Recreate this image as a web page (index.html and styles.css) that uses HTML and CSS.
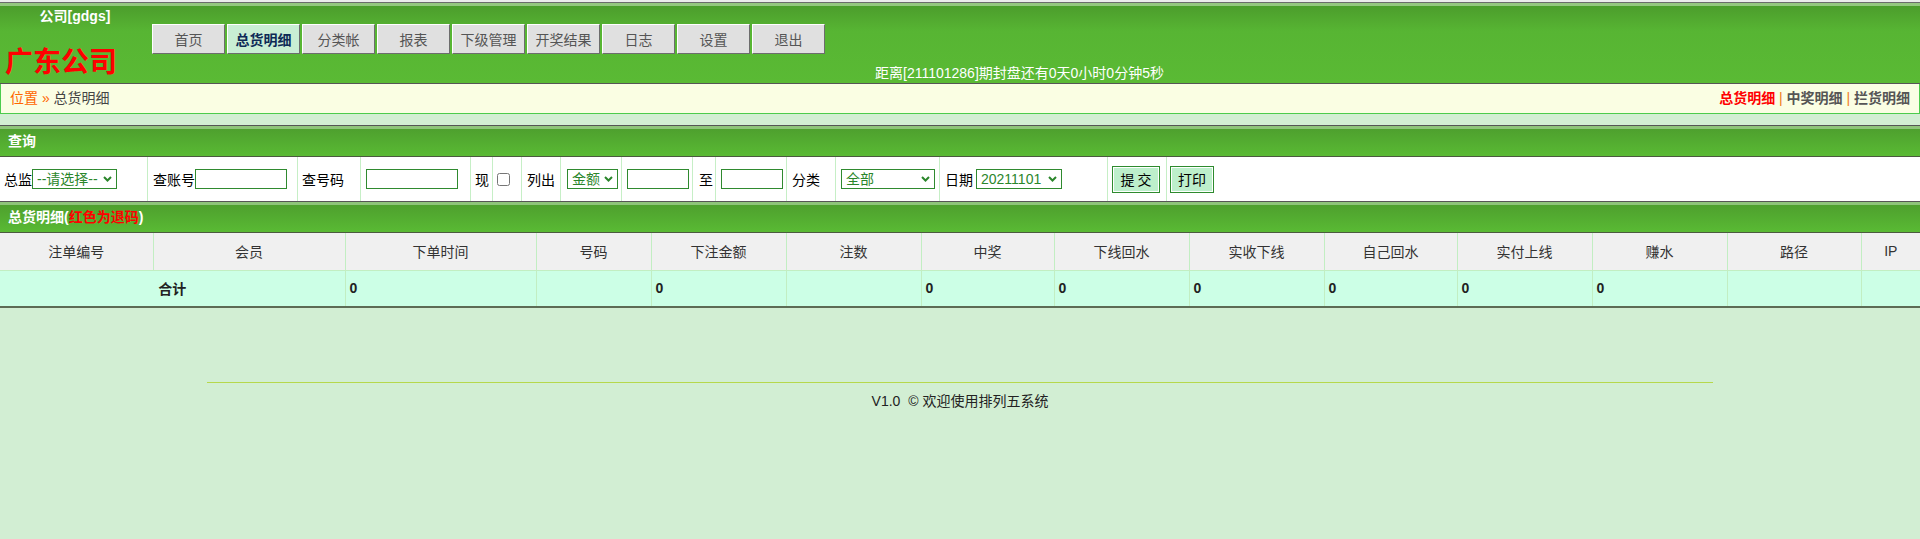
FILE: index.html
```html
<!DOCTYPE html>
<html lang="zh-CN">
<head>
<meta charset="utf-8">
<title>总货明细</title>
<link rel="stylesheet" href="styles.css">
</head>
<body>
<div class="topstrip"></div>
<header class="header">
  <div class="brand">
    <div class="company">公司[gdgs]</div>
    <div class="name">广东公司</div>
  </div>
  <div class="header-main">
    <nav class="nav">
      <a class="btn">首页</a>
      <a class="btn active">总货明细</a>
      <a class="btn">分类帐</a>
      <a class="btn">报表</a>
      <a class="btn">下级管理</a>
      <a class="btn">开奖结果</a>
      <a class="btn">日志</a>
      <a class="btn">设置</a>
      <a class="btn">退出</a>
    </nav>
    <div class="countdown">距离[211101286]期封盘还有0天0小时0分钟5秒</div>
  </div>
</header>

<div class="crumb">
  <div class="crumb-left"><span class="loc">位置</span> <span class="sep">»</span> 总货明细</div>
  <div class="crumb-right"><a class="on">总货明细</a> <span class="pipe">|</span> <a>中奖明细</a> <span class="pipe">|</span> <a>拦货明细</a></div>
</div>

<section class="panel">
  <div class="bar-title">查询</div>
  <form class="filter">
    <div class="cell c1">总监<span class="sel s1"><select><option>--请选择--</option></select><svg class="chev" viewBox="0 0 9 6"><path d="M1 1 L4.5 4.5 L8 1"/></svg></span></div>
    <div class="cell c2">查账号<input class="txt t1" type="text"></div>
    <div class="cell c3">查号码</div>
    <div class="cell c4"><input class="txt t1" type="text"></div>
    <div class="cell c5">现</div>
    <div class="cell c6"><input class="chk" type="checkbox"></div>
    <div class="cell c7">列出</div>
    <div class="cell c8"><span class="sel s2"><select><option>金额</option></select><svg class="chev" viewBox="0 0 9 6"><path d="M1 1 L4.5 4.5 L8 1"/></svg></span></div>
    <div class="cell c9"><input class="txt t2" type="text"></div>
    <div class="cell c10">至</div>
    <div class="cell c11"><input class="txt t2" type="text"></div>
    <div class="cell c12">分类</div>
    <div class="cell c13"><span class="sel s3"><select><option>全部</option></select><svg class="chev" viewBox="0 0 9 6"><path d="M1 1 L4.5 4.5 L8 1"/></svg></span></div>
    <div class="cell c14">日期<span class="sel s4"><select><option>20211101</option></select><svg class="chev" viewBox="0 0 9 6"><path d="M1 1 L4.5 4.5 L8 1"/></svg></span></div>
    <div class="cell c15"><button type="button" class="sbtn b1">提 交</button></div>
    <div class="cell c16"><button type="button" class="sbtn b2">打印</button></div>
  </form>

  <div class="bar-title">总货明细<span class="paren">(</span><span class="red">红色为退码</span><span class="paren">)</span></div>
  <table class="data">
    <colgroup>
      <col class="w153"><col class="w192"><col class="w191"><col class="w115">
      <col class="w135"><col class="w135"><col class="w133"><col class="w135">
      <col class="w135"><col class="w133"><col class="w135"><col class="w135">
      <col class="w134"><col class="w59">
    </colgroup>
    <thead>
      <tr>
        <th>注单编号</th><th>会员</th><th>下单时间</th><th>号码</th><th>下注金额</th><th>注数</th><th>中奖</th>
        <th>下线回水</th><th>实收下线</th><th>自己回水</th><th>实付上线</th><th>赚水</th><th>路径</th><th>IP</th>
      </tr>
    </thead>
    <tbody>
      <tr class="sum">
        <td colspan="2" class="total">合计</td>
        <td>0</td><td></td><td>0</td><td></td><td>0</td><td>0</td><td>0</td><td>0</td><td>0</td><td>0</td><td></td><td></td>
      </tr>
    </tbody>
  </table>
</section>

<footer class="footer">
  <div class="rule"></div>
  <div class="copy">V1.0&nbsp; © 欢迎使用排列五系统</div>
</footer>
</body>
</html>
```

FILE: styles.css
```css
* { box-sizing: border-box; }

html, body {
  margin: 0;
  padding: 0;
}

body {
  background: #d2eed3;
  font-family: "Liberation Sans", "Noto Sans CJK SC", sans-serif;
  font-size: 14px;
  color: #000;
}

.topstrip {
  height: 2px;
  background: #ececec;
}

/* ---------- header ---------- */
.header {
  display: flex;
  height: 82px;
  border-top: 1px solid #6b6b6b;
  border-bottom: 1px solid #555;
  background: linear-gradient(#94c77f 0, #94c77f 3px, #4c9d2c 3px, #57b533 28px, #5aba34 100%);
}

.brand {
  width: 152px;
  flex: none;
}

.company {
  padding-top: 5px;
  padding-right: 2px;
  line-height: 16px;
  text-align: center;
  color: #fff;
  font-weight: bold;
  font-size: 14px;
}

.name {
  margin-top: 21px;
  padding-left: 5px;
  line-height: 30px;
  font-size: 28px;
  font-weight: bold;
  color: #f00;
  font-family: "Noto Sans CJK SC", sans-serif;
}

.header-main {
  flex: 1;
  display: flex;
  flex-direction: column;
}

.nav {
  margin-top: 21px;
  display: flex;
  gap: 2px;
}

.btn {
  width: 73px;
  height: 30px;
  line-height: 28px;
  text-align: center;
  font-size: 14px;
  color: #555;
  background: #e0e0e0;
  border: 1px solid;
  border-color: #fff #6d6d6d #6d6d6d #fff;
  font-family: "Noto Sans CJK SC", sans-serif;
  cursor: pointer;
}

.btn.active {
  background: #c9eed4;
  color: #0d2a56;
  font-weight: bold;
}

.countdown {
  margin-top: 11px;
  padding-left: 723px;
  line-height: 16px;
  font-size: 14px;
  color: #fff;
  white-space: nowrap;
}

/* ---------- breadcrumb ---------- */
.crumb {
  display: flex;
  justify-content: space-between;
  height: 30px;
  padding: 0 9px;
  line-height: 29px;
  background: #fafee3;
  border: 1px solid #4ccc4c;
  border-top: none;
  color: #444;
}

.crumb .loc, .crumb .sep { color: #f60; }
.crumb-right a { color: #555; font-weight: bold; }
.crumb-right a.on { color: #f00; }
.crumb-right .pipe { color: #f07a1a; }

/* ---------- panel ---------- */
.panel {
  margin-top: 11px;
}

.bar-title {
  height: 32px;
  line-height: 30px;
  padding-left: 8px;
  border-top: 1px solid #555;
  border-bottom: 1px solid #4b5a3f;
  background: linear-gradient(#8ec47a 0, #8ec47a 3px, #4ea02e 3px, #58b733 27px, #5aba34 100%);
  color: #fff;
  font-weight: bold;
  font-size: 14px;
}

.bar-title .red { color: #f00; }

.filter {
  display: flex;
  height: 44px;
  background: #fff;
}

.cell {
  display: flex;
  align-items: center;
  flex: none;
  height: 100%;
  border-right: 1px solid #c6efc6;
  white-space: nowrap;
}

.c1 { width: 148px; padding-left: 4px; }
.c2 { width: 150px; padding-left: 5px; }
.c3 { width: 63px; padding-left: 4px; }
.c4 { width: 110px; padding-left: 5px; }
.c5 { width: 22px; padding-left: 4px; }
.c6 { width: 29px; padding-left: 4px; }
.c7 { width: 39px; padding-left: 5px; }
.c8 { width: 61px; padding-left: 6px; }
.c9 { width: 71px; padding-left: 5px; }
.c10 { width: 23px; padding-left: 6px; }
.c11 { width: 71px; padding-left: 5px; }
.c12 { width: 49px; padding-left: 5px; }
.c13 { width: 104px; padding-left: 5px; }
.c14 { width: 168px; padding-left: 5px; }
.c15 { width: 59px; padding-left: 4px; }
.c16 { border-right: none; padding-left: 3px; }

.txt {
  height: 20px;
  margin: 0;
  border: 1px solid #2f8a2f;
  background: #fff;
  padding: 0 2px;
  outline: none;
}
.t1 { width: 92px; }
.t2 { width: 62px; }

.sel {
  position: relative;
  display: inline-block;
  height: 20px;
}
.sel select {
  appearance: none;
  -webkit-appearance: none;
  height: 20px;
  margin: 0;
  padding: 0 0 0 4px;
  border: 1px solid #2f8a2f;
  border-radius: 0;
  background: #fff;
  color: #2b862b;
  font-family: "Liberation Sans", "Noto Sans CJK SC", sans-serif;
  font-size: 14px;
  line-height: 18px;
}
.s1 select { width: 85px; }
.s2 select { width: 51px; }
.s3 select { width: 94px; }
.s4 select { width: 86px; }
.s4 { margin-left: 3px; }

.chev {
  position: absolute;
  right: 5px;
  top: 7px;
  width: 9px;
  height: 6px;
  pointer-events: none;
}
.chev path {
  fill: none;
  stroke: #2b862b;
  stroke-width: 2;
}

.chk {
  width: 13px;
  height: 13px;
  margin: 0;
}

.sbtn {
  height: 27px;
  margin: 0;
  padding: 0;
  border: 1px solid #2e8b2e;
  box-shadow: inset 0 0 0 1px #fff;
  background: #bdefcb;
  color: #000;
  font-family: "Noto Sans CJK SC", sans-serif;
  font-size: 14px;
}
.b1 { width: 48px; }
.b2 { width: 44px; }

/* ---------- table ---------- */
.data {
  width: 100%;
  table-layout: fixed;
  border-collapse: collapse;
  border-bottom: 2px solid #5d6c55;
}

.w153 { width: 153px; }
.w192 { width: 192px; }
.w191 { width: 191px; }
.w115 { width: 115px; }
.w135 { width: 135px; }
.w133 { width: 133px; }
.w134 { width: 134px; }
.w59 { width: 59px; }

.data th, .data td {
  border: 1px solid #c2eec2;
  height: 37px;
  padding: 0 4px;
  font-size: 14px;
}
.data tr > :first-child { border-left: none; }
.data tr > :last-child { border-right: none; }
.data thead th { border-top: none; }

.data th {
  background: #f0f0f0;
  color: #333;
  font-weight: normal;
  text-align: center;
}

.data .sum td {
  background: #ccffe6;
  font-weight: bold;
  color: #222;
  text-align: left;
}

.data .sum td.total {
  text-align: center;
}

/* ---------- footer ---------- */
.footer {
  padding-top: 74px;
}

.rule {
  width: 1506px;
  margin: 0 auto;
  border-top: 1px solid #b6d84c;
}

.copy {
  margin-top: 8px;
  line-height: 20px;
  text-align: center;
  color: #222;
  font-size: 14px;
}
```
